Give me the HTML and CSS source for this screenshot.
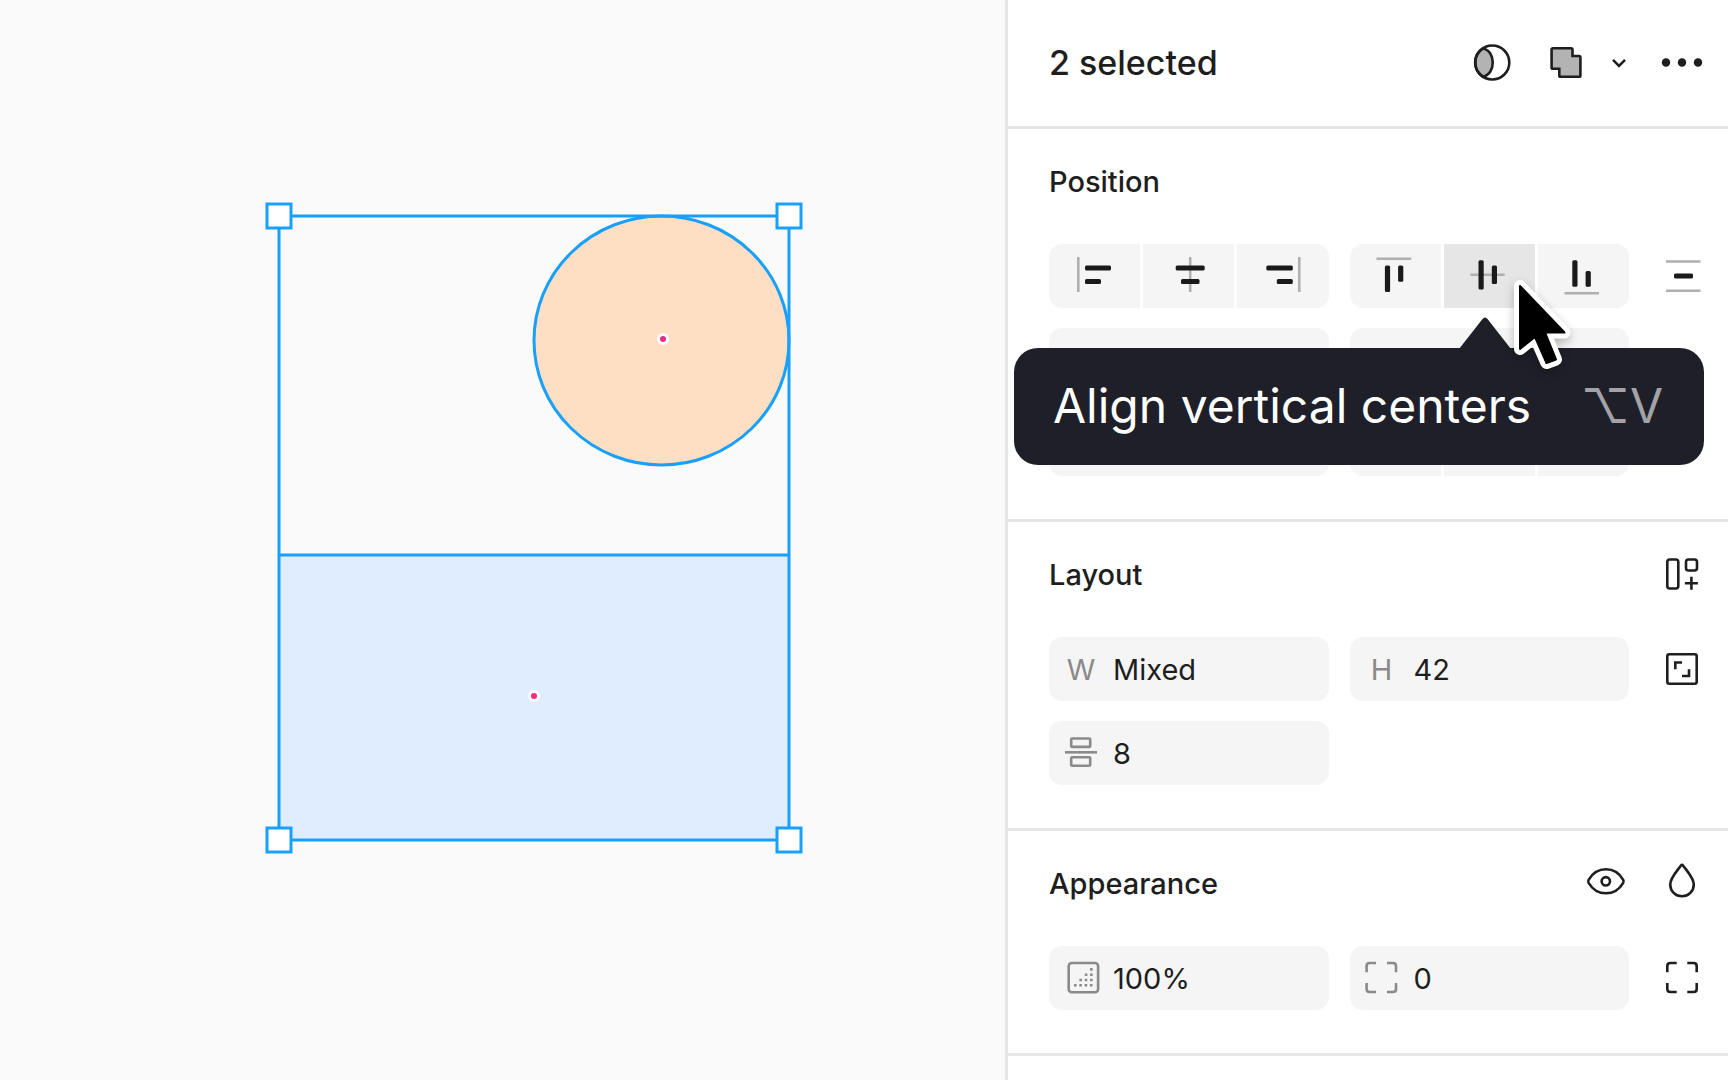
FILE: index.html
```html
<!DOCTYPE html>
<html lang="en">
  <head>
    <meta charset="utf-8" />
    <meta name="viewport" content="width=device-width, initial-scale=1.0" />
    <title>2 selected</title>
    <link rel="stylesheet" href="styles.css">
  </head>
  <body>
    <div class="editor">
      <main class="canvas">
        <!-- selected shapes with their bounding box -->
        <svg class="artwork" width="1005" height="1080" viewBox="0 0 1005 1080">
          <rect class="blue" x="279" y="555" width="510" height="285" />
          <path class="outline" d="M279 555H789" />
          <ellipse class="shape peach" cx="661.5" cy="340.5" rx="127.5" ry="124.5" />
          <rect class="outline" x="279" y="216" width="510" height="624" />
          <rect class="handle" x="267" y="204" width="24" height="24" />
          <rect class="handle" x="777" y="204" width="24" height="24" />
          <rect class="handle" x="267" y="828" width="24" height="24" />
          <rect class="handle" x="777" y="828" width="24" height="24" />
          <circle class="center" cx="663" cy="339" r="4.5" />
          <circle class="center" cx="534" cy="696" r="4.5" />
        </svg>
      </main>

      <aside class="panel">
        <header class="panel-header">
          <h1>2 selected</h1>
          <div class="actions">
            <button class="icon-btn" aria-label="Use as mask">
              <svg class="icon" viewBox="0 0 64 64">
                <path class="shade" d="M23 17.4 C36 20 36 43 23 45.8 C12.5 39 12.5 24 23 17.4Z" />
                <circle cx="32.3" cy="31.5" r="17" />
              </svg>
            </button>
            <div class="split">
              <button class="icon-btn" aria-label="Union selection">
                <svg class="icon" viewBox="0 0 64 64">
                  <path class="shade" d="M19 17.3H37.2Q38.5 17.3 38.5 18.6V25H45Q46.4 25 46.4 26.3V44.4Q46.4 45.8 45 45.8H26.6Q25.3 45.8 25.3 44.4V37.8H19Q17.6 37.8 17.6 36.5V18.6Q17.6 17.3 19 17.3Z" />
                </svg>
              </button>
              <button class="icon-btn narrow" aria-label="More boolean groups">
                <svg class="icon" viewBox="0 0 42 64">
                  <path d="M15 28.8L21 34.8L27 28.8" />
                </svg>
              </button>
            </div>
            <button class="icon-btn" aria-label="More actions">
              <svg class="icon dots" viewBox="0 0 64 64">
                <circle cx="16" cy="31.5" r="4.2" />
                <circle cx="32" cy="31.5" r="4.2" />
                <circle cx="48" cy="31.5" r="4.2" />
              </svg>
            </button>
          </div>
        </header>

        <section class="section">
          <div class="section-head">
            <h2>Position</h2>
          </div>
          <div class="grid">
            <div class="segments">
              <button aria-label="Align left">
                <svg class="icon align" viewBox="0 0 64 64">
                  <path class="guide" d="M15.3 13V48" />
                  <rect x="22" y="21.4" width="26" height="5.2" rx="1.5" />
                  <rect x="22" y="34.9" width="16" height="5.2" rx="1.5" />
                </svg>
              </button>
              <button aria-label="Align horizontal centers">
                <svg class="icon align" viewBox="0 0 64 64">
                  <path class="guide" d="M33.2 13V48" />
                  <rect x="18.7" y="21.4" width="29" height="5.2" rx="1.5" />
                  <rect x="24" y="34.9" width="18.5" height="5.2" rx="1.5" />
                </svg>
              </button>
              <button aria-label="Align right">
                <svg class="icon align" viewBox="0 0 64 64">
                  <path class="guide" d="M48.3 13V48" />
                  <rect x="15.3" y="21.4" width="26.5" height="5.2" rx="1.5" />
                  <rect x="25.8" y="34.9" width="16" height="5.2" rx="1.5" />
                </svg>
              </button>
            </div>
            <div class="segments">
              <button aria-label="Align top">
                <svg class="icon align" viewBox="0 0 64 64">
                  <path class="guide" d="M13.5 14.8H48.3" />
                  <rect x="21.9" y="21.4" width="5.2" height="26.6" rx="1.5" />
                  <rect x="35.1" y="21.4" width="5.2" height="16.3" rx="1.5" />
                </svg>
              </button>
              <button class="hovered" aria-label="Align vertical centers">
                <svg class="icon align" viewBox="0 0 64 64">
                  <path class="guide" d="M13.5 30.8H47.7" />
                  <rect x="21.5" y="16.2" width="5.2" height="29.2" rx="1.5" />
                  <rect x="34.8" y="21.5" width="5.2" height="18.5" rx="1.5" />
                </svg>
              </button>
              <button aria-label="Align bottom">
                <svg class="icon align" viewBox="0 0 64 64">
                  <path class="guide" d="M13.5 49.2H48" />
                  <rect x="21.3" y="16.2" width="5.2" height="26.6" rx="1.5" />
                  <rect x="34.6" y="27" width="5.2" height="15.8" rx="1.5" />
                </svg>
              </button>
            </div>
            <button class="icon-btn" aria-label="Distribute vertical spacing">
              <svg class="icon align" viewBox="0 0 64 64">
                <path class="guide" d="M16 17.5H50.5M16 46.7H50.5" />
                <rect x="24" y="29.4" width="19" height="5.2" rx="1.5" />
              </svg>
            </button>

            <input class="field" type="text" aria-label="X position" />
            <input class="field" type="text" aria-label="Y position" />
            <span></span>

            <input class="field" type="text" aria-label="Rotation" />
            <div class="segments">
              <button aria-label="Rotate 90 degrees"></button>
              <button aria-label="Flip horizontal"></button>
              <button aria-label="Flip vertical"></button>
            </div>
          </div>

          <div class="tooltip" role="tooltip">
            <svg class="tooltip-arrow" width="52" height="32" viewBox="0 0 52 32">
              <path d="M0 32L23.5 2Q26 -1 28.5 2L52 32Z" />
            </svg>
            <span>Align vertical centers</span>
            <kbd>⌥V</kbd>
          </div>
          <svg class="cursor" width="80" height="110" viewBox="0 0 80 110">
            <path class="cursor-edge" d="M20 16L64.5 62.5H45L56 89.5L46.5 93L35 67L20 79Z" />
            <path d="M20 16L64.5 62.5H45L56 89.5L46.5 93L35 67L20 79Z" />
          </svg>
        </section>

        <section class="section">
          <div class="section-head">
            <h2>Layout</h2>
            <button class="icon-btn" aria-label="Add auto layout">
              <svg class="icon" viewBox="0 0 64 64">
                <rect x="17.3" y="16.5" width="11" height="29" rx="2.5" />
                <rect x="36" y="16.5" width="11" height="11" rx="2.5" />
                <path d="M41.4 33.8V46.8M34.9 40.3H47.9" />
              </svg>
            </button>
          </div>
          <div class="grid">
            <label class="field">
              <span class="field-label">W</span>
              <input type="text" value="Mixed" />
            </label>
            <label class="field">
              <span class="field-label">H</span>
              <input type="text" value="42" />
            </label>
            <button class="icon-btn" aria-label="Lock aspect ratio">
              <svg class="icon" viewBox="0 0 64 64">
                <rect x="17.3" y="17.3" width="29.4" height="29.4" rx="2" />
                <path d="M32 25.5H25.3V32.3M39 32.3V39H32" />
              </svg>
            </button>
            <label class="field">
              <svg class="icon muted" viewBox="0 0 64 64">
                <rect x="22.2" y="17.5" width="19" height="8.4" rx="1" />
                <path d="M16 31.3H48" />
                <rect x="22.2" y="36.3" width="19" height="8.4" rx="1" />
              </svg>
              <input type="text" value="8" aria-label="Vertical gap" />
            </label>
          </div>
        </section>

        <section class="section">
          <div class="section-head">
            <h2>Appearance</h2>
            <button class="icon-btn" aria-label="Hide">
              <svg class="icon" viewBox="0 0 64 64">
                <path d="M14.6 27.8C23 13.8 41 13.8 49.2 27.8Q50 29.3 49.2 30.8C41 44.8 23 44.8 14.6 30.8Q13.8 29.3 14.6 27.8Z" />
                <circle cx="31.8" cy="29.3" r="4.2" />
              </svg>
            </button>
            <button class="icon-btn" aria-label="Blend mode">
              <svg class="icon" viewBox="0 0 64 64">
                <path d="M31 13.4Q32 12 33 13.4C37 19 43.8 26 43.8 32.5A11.8 11.8 0 0 1 20.2 32.5C20.2 26 27 19 31 13.4Z" />
              </svg>
            </button>
          </div>
          <div class="grid">
            <label class="field">
              <svg class="icon muted" viewBox="0 0 64 64">
                <rect x="19.7" y="17" width="29.4" height="29.2" rx="3" />
                <path class="dotted" d="M25 39.3H45M30.4 34H45M35.8 28.7H45M41 23.4H45" />
              </svg>
              <input type="text" value="100%" aria-label="Opacity" />
            </label>
            <label class="field">
              <svg class="icon muted" viewBox="0 0 64 64">
                <path d="M16.6 26.3V20Q16.6 17 19.6 17H26M37 17H43Q46 17 46 20V26.3M46 37V43Q46 46 43 46H37M26 46H19.6Q16.6 46 16.6 43V37" />
              </svg>
              <input type="text" value="0" aria-label="Corner radius" />
            </label>
            <button class="icon-btn" aria-label="Individual corners">
              <svg class="icon" viewBox="0 0 64 64">
                <path d="M17.3 26.3V20Q17.3 17 20.3 17H26.7M37.3 17H43.7Q46.7 17 46.7 20V26.3M46.7 37V43Q46.7 46 43.7 46H37.3M26.7 46H20.3Q17.3 46 17.3 43V37" />
              </svg>
            </button>
          </div>
        </section>
      </aside>
    </div>
  </body>
</html>
```
FILE: styles.css
```css
* {
  box-sizing: border-box;
}

body {
  margin: 0;
  font-family: Inter, "Liberation Sans", sans-serif;
  font-size: 29px;
  color: #1e1e1e;
  background-color: #fff;
}

.editor {
  display: flex;
  height: 100vh;
  overflow: hidden;
}

/* canvas */
.canvas {
  flex: 1;
  min-width: 0;
  overflow: hidden;
  background-color: #fafafa;
}

.artwork {
  display: block;
}

.shape,
.outline,
.handle {
  stroke: #18a0fb;
  stroke-width: 3;
}

.blue {
  fill: #e0edff;
}

.peach {
  fill: #ffdfc3;
}

.outline {
  fill: none;
}

.handle {
  fill: #fff;
}

.center {
  fill: #f02a85;
  stroke: #fff;
  stroke-width: 3;
}

/* right panel */
.panel {
  width: 723px;
  border-left: 3px solid #e6e6e6;
  background-color: #fff;
}

.panel-header {
  display: flex;
  align-items: center;
  justify-content: space-between;
  height: 129px;
  padding: 0 14px 0 41px;
  border-bottom: 3px solid #e6e6e6;
}

h1,
h2 {
  margin: 0;
  padding-bottom: 2px;
  font-weight: 500;
}

h1 {
  font-size: 34px;
}

h2 {
  flex: 1;
  font-size: 29px;
}

.actions {
  display: flex;
  gap: 10px;
}

.split {
  display: flex;
}

button {
  display: flex;
  align-items: center;
  justify-content: center;
  height: 64px;
  padding: 0;
  border: none;
  background: none;
}

.icon-btn {
  width: 64px;
}

.narrow {
  width: 42px;
}

.icon {
  flex: none;
  height: 64px;
  fill: none;
  stroke: #1e1e1e;
  stroke-width: 2.6;
}

.muted {
  width: 64px;
  stroke: #8a8a8a;
}

.shade {
  fill: #b3b3b3;
}

.dots {
  fill: #1e1e1e;
  stroke: none;
}

.align rect {
  fill: #1a1a1a;
  stroke: none;
}

.align .guide {
  stroke: #b0b0b0;
}

.dotted {
  stroke-dasharray: 2.6 2.7;
}

.section {
  position: relative;
  padding: 21px 14px 43px 41px;
  border-bottom: 3px solid #e6e6e6;
}

.section-head {
  display: flex;
  align-items: center;
  gap: 12px;
  height: 64px;
  margin-bottom: 30px;
}

.grid {
  display: grid;
  grid-template-columns: 1fr 1fr 64px;
  gap: 20px 21px;
}

.segments {
  display: flex;
  gap: 3px;
  border-radius: 13px;
  overflow: hidden;
}

.segments button {
  flex: 1;
  background-color: #f5f5f5;
}

.segments .hovered {
  background-color: #e6e6e6;
}

.field {
  display: flex;
  align-items: center;
  min-width: 0;
  height: 64px;
  border: none;
  border-radius: 13px;
  background-color: #f5f5f5;
}

.field-label {
  width: 64px;
  text-align: center;
  color: #8a8a8a;
}

.field input {
  flex: 1;
  min-width: 0;
  padding: 0;
  border: none;
  font: inherit;
  color: inherit;
  background: none;
}

/* tooltip under the hovered button */
.tooltip {
  position: absolute;
  top: 219px;
  left: 6px;
  right: 24px;
  display: flex;
  align-items: center;
  justify-content: space-between;
  height: 117px;
  padding: 0 41px 2px 39px;
  border-radius: 24px;
  font-size: 48px;
  color: #fff;
  background-color: #1f1f29;
}

.tooltip kbd {
  font-family: inherit;
  color: #a2a2a7;
}

.tooltip-arrow {
  position: absolute;
  top: -31px;
  left: 445px;
  fill: #1f1f29;
}

.cursor {
  position: absolute;
  top: 141px;
  left: 492px;
  stroke: #000;
  stroke-width: 2;
  stroke-linejoin: round;
  filter: drop-shadow(0 4px 5px rgba(0, 0, 0, 0.25));
}

.cursor-edge {
  stroke: #fff;
  stroke-width: 12;
}
```
